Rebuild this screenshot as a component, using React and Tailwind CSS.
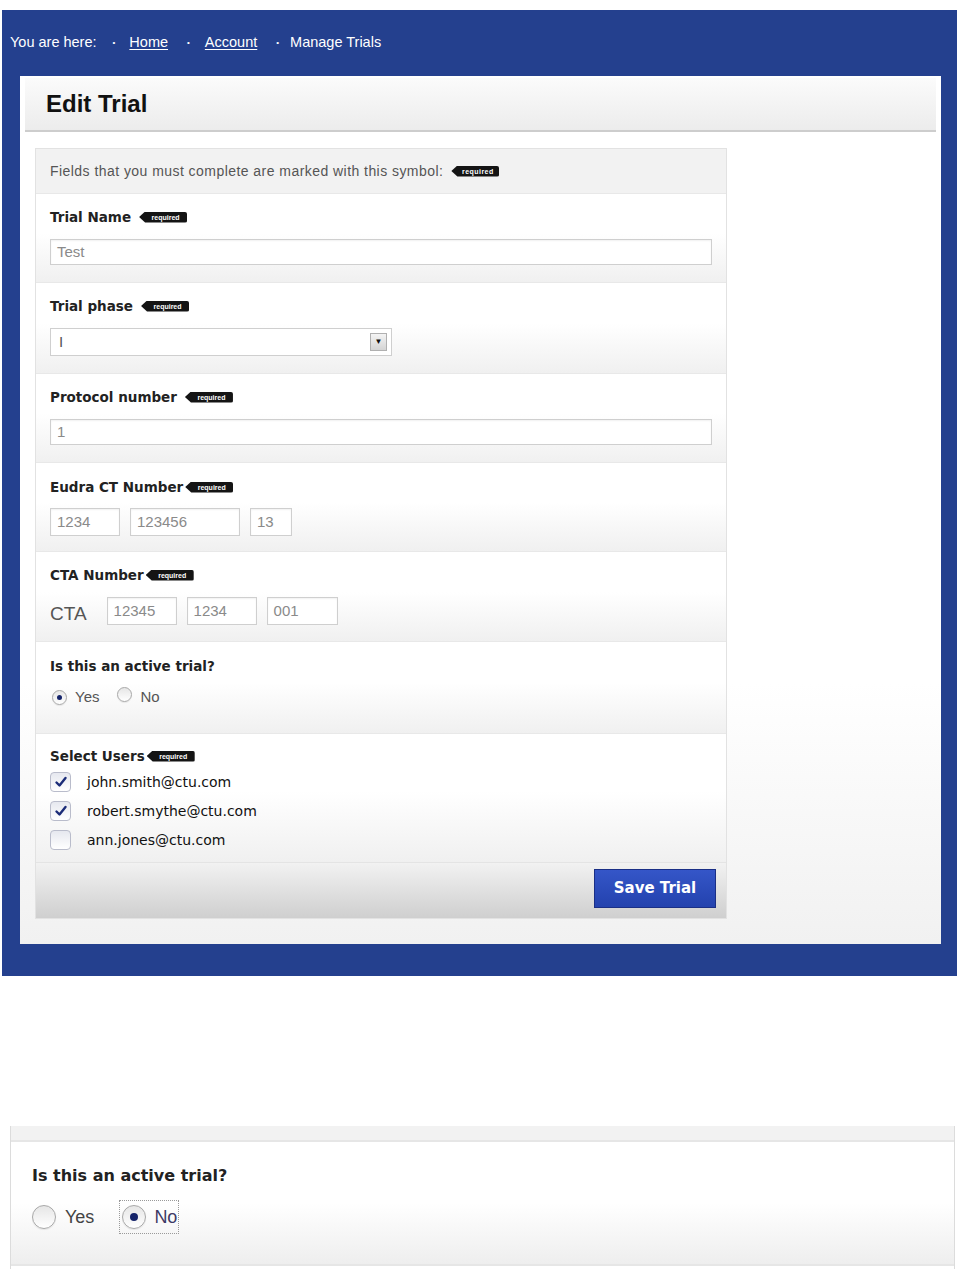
import React from "react";

const Req = ({ className = "" }) => (
  <span
    className={`inline-flex h-[11px] w-[48px] items-center justify-center rounded-r-[2px] bg-[#141414] pl-[5px] font-['Liberation_Sans'] text-[7px] leading-none font-bold text-white [clip-path:polygon(6px_0,100%_0,100%_100%,6px_100%,0_50%)] ${className}`}
  >
    required
  </span>
);

const Label = ({ children, gap = "ml-[8px]", badge = true }) => (
  <div className="flex h-[16px] items-center font-['DejaVu_Sans'] text-[13.5px] leading-[16px] font-bold text-[#222]">
    <span>{children}</span>
    {badge && <Req className={gap} />}
  </div>
);

const Section = ({ children, className = "" }) => (
  <div className={`border-t border-[#e8e8e8] bg-gradient-to-b from-white from-45% to-[#f0f0f0] px-[14px] ${className}`}>
    {children}
  </div>
);

const Field = ({ value, className = "" }) => (
  <div
    className={`flex items-center border border-[#cfcfcf] bg-white px-[6px] font-['Liberation_Sans'] text-[15px] text-[#8a8a8a] shadow-[inset_0_1px_2px_rgba(0,0,0,0.06)] ${className}`}
  >
    {value}
  </div>
);

const Radio = ({ checked, size = 15 }) => {
  const big = size > 18;
  return (
    <span
      className={`inline-flex items-center justify-center rounded-full border border-[#a8a8a8] bg-gradient-to-b from-[#e6e6e6] to-white shadow-[0_1px_1px_rgba(0,0,0,0.08)] ${big ? "h-[24px] w-[24px]" : "h-[15px] w-[15px]"}`}
    >
      {checked && (
        <span className={`rounded-full bg-[#15246a] ${big ? "h-[8px] w-[8px]" : "h-[5px] w-[5px]"}`} />
      )}
    </span>
  );
};

const Check = ({ checked }) => (
  <span className="inline-flex h-[20px] w-[21px] items-center justify-center rounded-[4px] border border-[#b9bccb] bg-gradient-to-b from-[#e6e8ef] to-white">
    {checked && (
      <svg width="14" height="14" viewBox="0 0 14 14">
        <path d="M2.5 7.5 L5.5 10.5 L11.5 3" fill="none" stroke="#1b2c78" strokeWidth="2.4" strokeLinecap="round" strokeLinejoin="round" />
      </svg>
    )}
  </span>
);

const Dot = ({ className = "mx-[16px]" }) => (
  <span className={`text-[8px] leading-none text-white ${className}`}>•</span>
);

export default function App() {
  const users = [
    { email: "john.smith@ctu.com", checked: true },
    { email: "robert.smythe@ctu.com", checked: true },
    { email: "ann.jones@ctu.com", checked: false },
  ];

  return (
    <div className="h-[1269px] w-[968px] overflow-hidden bg-white font-['Liberation_Sans']">
      <div className="ml-[2px] mt-[10px] w-[955px] bg-[#24408e] pb-[32px]">
        <div className="flex h-[66px] items-center pl-[8px] text-[14.5px] text-white">
          <span>You are here:</span>
          <Dot className="ml-[16px] mr-[14px]" />
          <span className="underline underline-offset-2">Home</span>
          <Dot className="ml-[19px] mr-[15px]" />
          <span className="underline underline-offset-2">Account</span>
          <Dot className="ml-[19px] mr-[11px]" />
          <span>Manage Trials</span>
        </div>

        <div className="ml-[18px] mr-[16px] bg-gradient-to-b from-white from-70% to-[#f1f1f1] px-[5px] pb-[25px] pt-[2px]">
          <div className="flex h-[54px] items-center border-b-2 border-[#cdcdcd] bg-gradient-to-b from-[#fbfbfb] to-[#ececec] pl-[21px] text-[24px] font-bold text-[#111]">
            Edit Trial
          </div>

          <div className="ml-[10px] mt-[16px] w-[692px] border border-[#e2e2e2]">
            <div className="flex h-[44px] items-center bg-[#f2f2f2] px-[14px] text-[14px] tracking-[0.45px] text-[#555]">
              <span>Fields that you must complete are marked with this symbol:</span>
              <Req className="ml-[8px]" />
            </div>

            <Section className="pb-[17px] pt-[15px]">
              <Label>Trial Name</Label>
              <Field value="Test" className="mt-[14px] h-[26px]" />
            </Section>

            <Section className="pb-[17px] pt-[15px]">
              <Label>Trial phase</Label>
              <div className="mt-[14px] flex h-[28px] w-[342px] items-center justify-between border border-[#cfcfcf] bg-white pl-[8px] pr-[4px] text-[15px] text-[#555]">
                <span>I</span>
                <span className="flex h-[18px] w-[17px] items-center justify-center border border-[#b0b0b0] bg-gradient-to-b from-[#f4f4f4] to-[#d4d4d4] text-[8px] leading-none text-[#111]">
                  ▼
                </span>
              </div>
            </Section>

            <Section className="pb-[17px] pt-[15px]">
              <Label>Protocol number</Label>
              <Field value="1" className="mt-[14px] h-[26px]" />
            </Section>

            <Section className="pb-[15px] pt-[16px]">
              <Label gap="ml-[2px]">Eudra CT Number</Label>
              <div className="mt-[13px] flex gap-[10px]">
                <Field value="1234" className="h-[28px] w-[70px]" />
                <Field value="123456" className="h-[28px] w-[110px]" />
                <Field value="13" className="h-[28px] w-[42px]" />
              </div>
            </Section>

            <Section className="pb-[16px] pt-[15px]">
              <Label gap="ml-[2px]">CTA Number</Label>
              <div className="mt-[14px] flex h-[28px] items-center gap-[10px]">
                <span className="mr-[10px] pt-[6px] text-[19px] leading-[22px] text-[#555]">CTA</span>
                <Field value="12345" className="h-[28px] w-[70px]" />
                <Field value="1234" className="h-[28px] w-[70px]" />
                <Field value="001" className="h-[28px] w-[71px]" />
              </div>
            </Section>

            <Section className="pb-[26px] pt-[16px]">
              <Label badge={false}>Is this an active trial?</Label>
              <div className="mt-[13px] flex h-[20px] items-center pl-[2px] text-[15px] text-[#555]">
                <Radio checked />
                <span className="ml-[8px]">Yes</span>
                <span className="ml-[18px]">
                  <Radio />
                </span>
                <span className="ml-[8px]">No</span>
              </div>
            </Section>

            <Section className="pb-[12px] pt-[14px]">
              <Label gap="ml-[2px]">Select Users</Label>
              <div className="mt-[8px] flex flex-col gap-[9px]">
                {users.map((u) => (
                  <div key={u.email} className="flex h-[20px] items-center">
                    <Check checked={u.checked} />
                    <span className="ml-[16px] font-['DejaVu_Sans'] text-[14px] text-[#111]">{u.email}</span>
                  </div>
                ))}
              </div>
            </Section>

            <div className="flex h-[56px] justify-end border-t border-[#e4e4e4] bg-gradient-to-b from-[#f2f2f2] to-[#cfcfcf] pr-[10px] pt-[6px]">
              <button className="h-[39px] w-[122px] border border-[#1a2f86] bg-gradient-to-b from-[#3556c8] to-[#2342ae] font-['DejaVu_Sans'] text-[15px] font-bold text-white">
                Save Trial
              </button>
            </div>
          </div>
        </div>
      </div>

      <div className="ml-[10px] mt-[150px] w-[945px] border-l border-r border-[#dcdcdc]">
        <div className="h-[14px] bg-[#f2f2f2]" />
        <div className="border-y-2 border-[#e6e6e6] bg-gradient-to-b from-white from-50% to-[#eeeeee] pb-[31px] pl-[21px] pt-[24px]">
          <div className="font-['DejaVu_Sans'] text-[16px] leading-[20px] font-bold text-[#222]">
            Is this an active trial?
          </div>
          <div className="mt-[15px] flex h-[32px] items-center text-[18px] text-[#444]">
            <Radio size={24} />
            <span className="ml-[9px]">Yes</span>
            <span className="ml-[26px] flex h-[32px] items-center pl-[2px] pr-[1px] outline outline-1 outline-dotted outline-[#9a9a9a]">
              <Radio size={24} checked />
              <span className="ml-[8px] text-[#3d3a66]">No</span>
            </span>
          </div>
        </div>
        <div className="h-[6px]" />
      </div>
    </div>
  );
}
